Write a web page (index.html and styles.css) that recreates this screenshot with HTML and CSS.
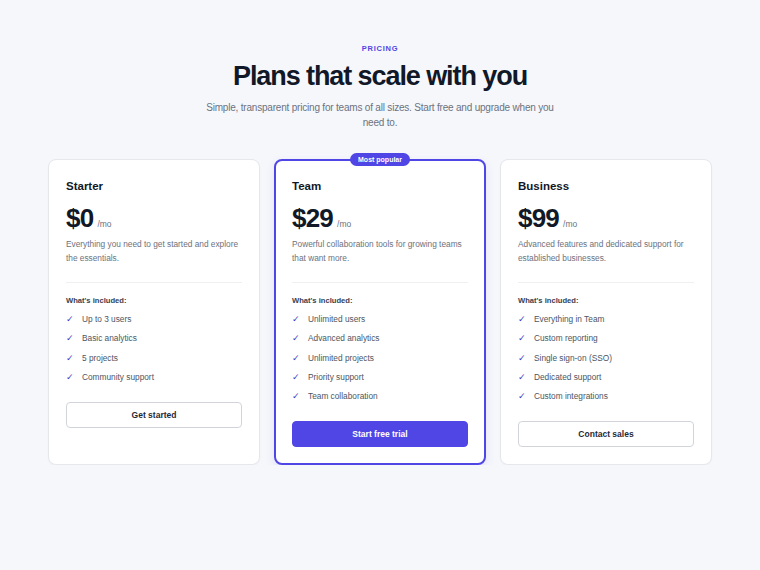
FILE: index.html
```html
<!DOCTYPE html>
<html lang="en">
<head>
    <meta charset="UTF-8">
    <meta name="viewport" content="width=device-width, initial-scale=1.0">
    <title>Pricing</title>
    <link rel="stylesheet" href="styles.css">
</head>
<body>
    <header class="intro">
        <div class="eyebrow">Pricing</div>
        <h1>Plans that scale with you</h1>
        <p>Simple, transparent pricing for teams of all sizes. Start free and upgrade when you need to.</p>
    </header>
    <main class="plans">
        <div class="plan">
            <h3>Starter</h3>
            <div class="price"><span class="amount">$0</span><span class="per">/mo</span></div>
            <p class="desc">Everything you need to get started and explore the essentials.</p>
            <div class="included">What's included:</div>
            <ul>
                <li>Up to 3 users</li>
                <li>Basic analytics</li>
                <li>5 projects</li>
                <li>Community support</li>
            </ul>
            <button>Get started</button>
        </div>
        <div class="plan featured">
            <span class="badge">Most popular</span>
            <h3>Team</h3>
            <div class="price"><span class="amount">$29</span><span class="per">/mo</span></div>
            <p class="desc">Powerful collaboration tools for growing teams that want more.</p>
            <div class="included">What's included:</div>
            <ul>
                <li>Unlimited users</li>
                <li>Advanced analytics</li>
                <li>Unlimited projects</li>
                <li>Priority support</li>
                <li>Team collaboration</li>
            </ul>
            <button class="primary">Start free trial</button>
        </div>
        <div class="plan">
            <h3>Business</h3>
            <div class="price"><span class="amount">$99</span><span class="per">/mo</span></div>
            <p class="desc">Advanced features and dedicated support for established businesses.</p>
            <div class="included">What's included:</div>
            <ul>
                <li>Everything in Team</li>
                <li>Custom reporting</li>
                <li>Single sign-on (SSO)</li>
                <li>Dedicated support</li>
                <li>Custom integrations</li>
            </ul>
            <button>Contact sales</button>
        </div>
    </main>
</body>
</html>
```
FILE: styles.css
```css
body {
    font-family: "Liberation Sans", Arial, sans-serif;
    margin: 0;
    padding: 0;
    background-color: #f6f7fb;
    color: #111827;
}
.intro {
    text-align: center;
    padding-top: 44px;
}
.eyebrow {
    color: #4f46e5;
    font-size: 7.5px;
    font-weight: bold;
    letter-spacing: 0.1em;
    text-transform: uppercase;
}
h1 {
    margin: 6px 0 0;
    font-size: 27px;
    letter-spacing: -0.04em;
    line-height: 34px;
}
.intro p {
    margin: 7px auto 0;
    max-width: 358px;
    font-size: 10px;
    letter-spacing: -0.2px;
    line-height: 15px;
    color: #6b7280;
}
.plans {
    display: grid;
    grid-template-columns: repeat(3, 212px);
    gap: 14px;
    justify-content: center;
    margin-top: 29px;
}
.plan {
    position: relative;
    display: flex;
    flex-direction: column;
    background: white;
    border: 1px solid #e5e7eb;
    border-radius: 8px;
    padding: 17px 17px 17px;
    box-shadow: 0 1px 2px rgba(0,0,0,0.03);
}
.plan.featured {
    border: 2px solid #4f46e5;
    padding: 16px 16px 16px;
    box-shadow: 0 4px 10px rgba(79,70,229,0.12);
}
.badge {
    position: absolute;
    top: -8px;
    left: 50%;
    transform: translateX(-50%);
    background: #4f46e5;
    color: white;
    font-size: 7px;
    font-weight: bold;
    padding: 3px 8px;
    border-radius: 10px;
    white-space: nowrap;
}
h3 {
    margin: 1px 0 0;
    font-size: 11.5px;
    line-height: 16px;
}
.price {
    margin-top: 9px;
    display: flex;
    align-items: baseline;
    gap: 4px;
}
.amount {
    font-size: 26px;
    font-weight: bold;
    letter-spacing: -0.03em;
    line-height: 30px;
}
.per {
    font-size: 8.5px;
    color: #6b7280;
}
.desc {
    margin: 4px 0 0;
    font-size: 8.3px;
    line-height: 14px;
    color: #6b7280;
    padding-bottom: 17px;
    border-bottom: 1px solid #eef0f3;
}
.included {
    margin-top: 13px;
    font-size: 7.6px;
    font-weight: bold;
    color: #374151;
}
ul {
    list-style: none;
    margin: 5px 0 0;
    padding: 0;
}
li {
    font-size: 8.3px;
    line-height: 19.25px;
    color: #4b5563;
    padding-left: 16px;
    position: relative;
}
li::before {
    content: "\2713";
    position: absolute;
    left: 0;
    font-size: 9px;
    color: #4338ca;
}
button {
    margin-top: 15px;
    height: 26px;
    font-family: inherit;
    font-size: 8.5px;
    font-weight: bold;
    color: #1f2937;
    background: white;
    border: 1px solid #d1d5db;
    border-radius: 4px;
    cursor: pointer;
}
button.primary {
    background: #4f46e5;
    border-color: #4f46e5;
    color: white;
}
```
